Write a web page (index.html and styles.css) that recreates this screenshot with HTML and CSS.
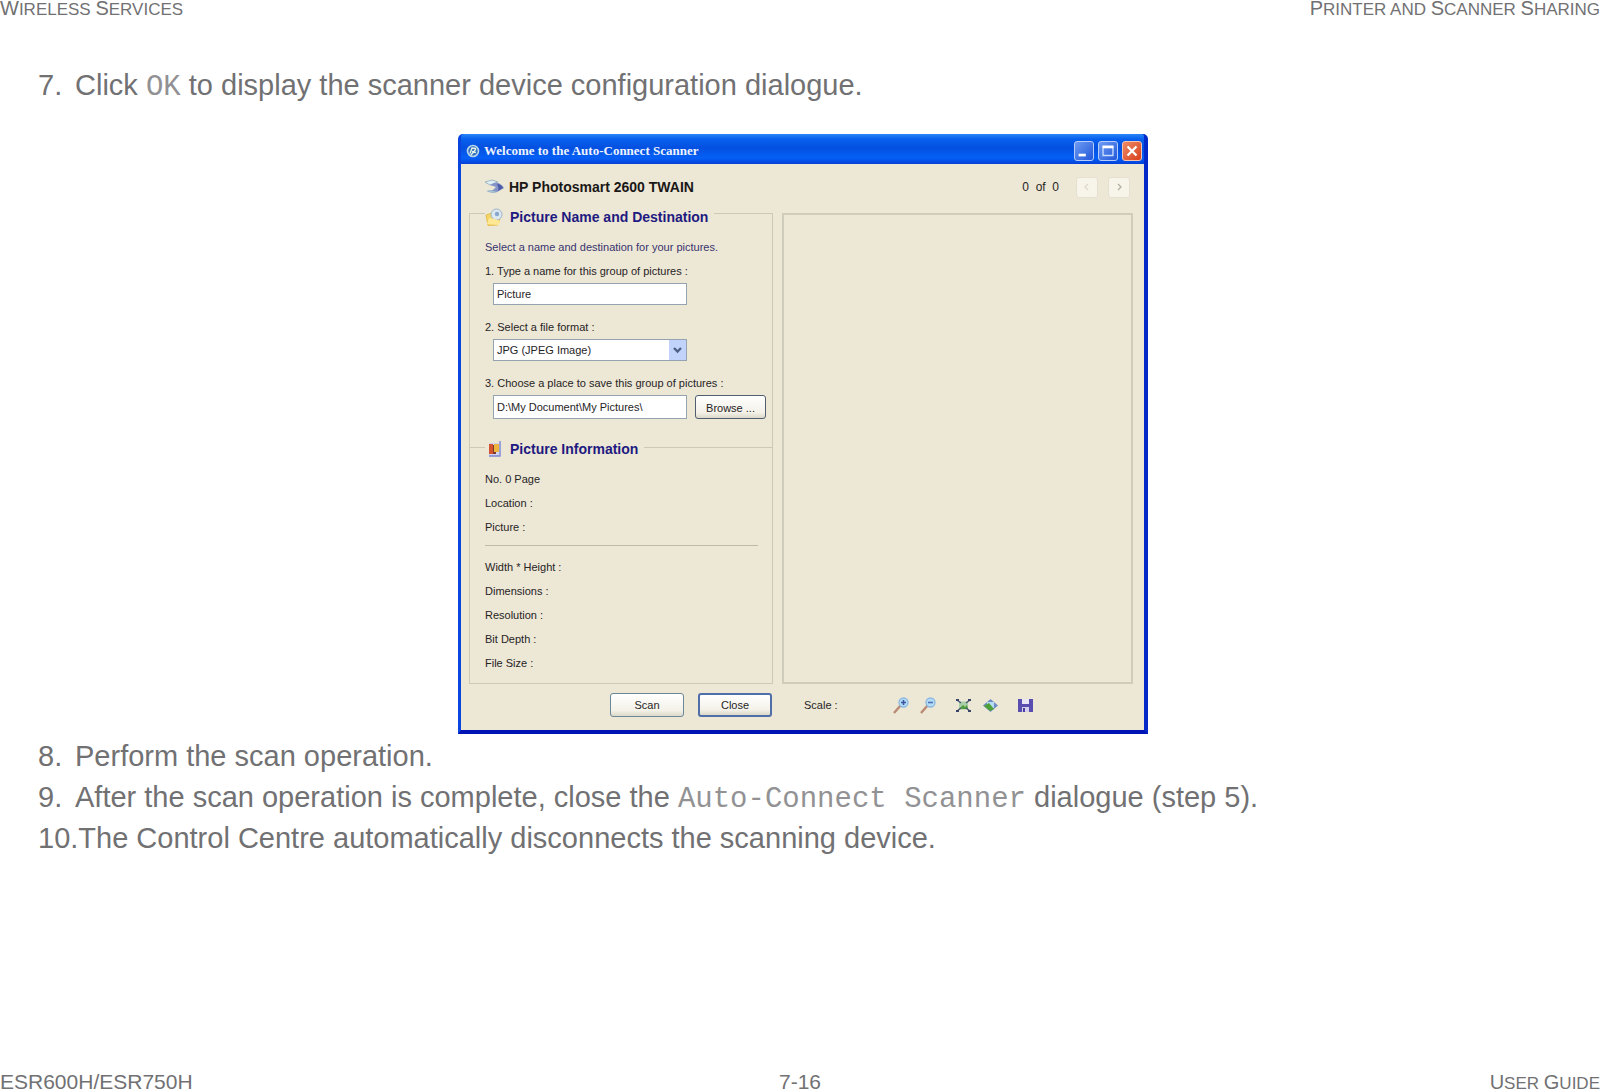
FILE: index.html
```html
<!DOCTYPE html>
<html lang="en">
<head>
<meta charset="utf-8">
<title>Wireless Services - Printer and Scanner Sharing</title>
<link rel="stylesheet" href="styles.css">
</head>
<body>
<header class="running">
  <span class="caps"><span class="cap">W</span>IRELESS <span class="cap">S</span>ERVICES</span>
  <span class="caps"><span class="cap">P</span>RINTER AND <span class="cap">S</span>CANNER <span class="cap">S</span>HARING</span>
</header>

<main class="content">
  <ol class="steps" start="7">
    <li><span class="num">7.</span><p>Click <code>OK</code> to display the scanner device configuration dialogue.</p></li>
  </ol>

  <figure class="figure">
    <section class="window" aria-label="Welcome to the Auto-Connect Scanner">
      <div class="titlebar">
        <svg class="app-icon" viewBox="0 0 14 14" width="14" height="14"><circle cx="7" cy="7" r="5.5" fill="#2f6fc0" stroke="#b9d8ee" stroke-width="1.6"/><path d="M4 9.5 6 4l4 .5M5 11l5-6M6 7.5l4 1" stroke="#e6f3e4" stroke-width="1.3" fill="none"/></svg>
        <span class="titlebar-text">Welcome to the Auto-Connect Scanner</span>
        <button class="win-btn" type="button" aria-label="Minimize"><svg viewBox="0 0 20 20" width="18" height="18"><path d="M4 13h8v3H4z" fill="#fff"/></svg></button>
        <button class="win-btn" type="button" aria-label="Maximize"><svg viewBox="0 0 20 20" width="18" height="18"><path d="M4.5 5h11v10h-11z" fill="none" stroke="#c5dcff" stroke-width="1.5"/><path d="M4 4h12v3H4z" fill="#fff"/></svg></button>
        <button class="win-btn win-close" type="button" aria-label="Close window"><svg viewBox="0 0 20 20" width="18" height="18"><path d="m5 5 10 10M15 5 5 15" stroke="#fff" stroke-width="2.6"/></svg></button>
      </div>

      <div class="window-body">
        <div class="device">
          <svg viewBox="0 0 22 16" width="22" height="16"><path d="M2 3 9 1l6 2-8 3z" fill="#dff0f5" stroke="#8eabb8" stroke-width=".8"/><path d="M4 12c3 2 7 2 10 1l7-4c-2-4-6-6-10-5L7 6l6 2-3 3z" fill="#8294c8"/><path d="M14 5c3 0 5 2 6 4l-5 3c1-3 0-5-1-7z" fill="#4c5aa8"/><path d="m3 12 8 2 3-1-7-2z" fill="#a7c3cd"/></svg>
          <strong class="device-name">HP Photosmart 2600 TWAIN</strong>
          <span class="count">0&nbsp; of&nbsp; 0</span>
          <button class="nav-btn" type="button" aria-label="Previous"><svg viewBox="0 0 10 10" width="10" height="10"><path d="M6 2 3 5l3 3" fill="none" stroke="#ded9cc" stroke-width="1.3"/></svg></button>
          <button class="nav-btn" type="button" aria-label="Next"><svg viewBox="0 0 10 10" width="10" height="10"><path d="m4 2 3 3-3 3" fill="none" stroke="#b3aea2" stroke-width="1.3"/></svg></button>
        </div>

        <div class="columns">
          <div class="left">
            <fieldset class="group group-dest">
              <legend>
                <svg viewBox="0 0 20 18" width="20" height="18"><path d="M1 7 7 5l2 2 6 4-2 6-10 .5z" fill="#f5d563" stroke="#dfb643" stroke-width=".8"/><circle cx="11.500" cy="6.500" r="5.500" fill="#dbe8ef" stroke="#9fb4c8"/><circle cx="12" cy="6" r="2.200" fill="#8aa6cf"/><path d="m2 16 2-6 6 1 5 2-1 4z" fill="#ffe894"/></svg>
                Picture Name and Destination
              </legend>
              <p class="hint">Select a name and destination for your pictures.</p>
              <label for="pic-name">1. Type a name for this group of pictures :</label>
              <input class="field" id="pic-name" type="text" value="Picture">
              <label for="format" class="next">2. Select a file format :</label>
              <span class="select-wrap">
                <select class="field" id="format"><option>JPG (JPEG Image)</option></select>
                <svg class="arrow" viewBox="0 0 17 20" width="17" height="20"><path d="M0 0h17v20H0z" fill="#c1d3fb"/><path d="m5 8 3.500 3.500L12 8" fill="none" stroke="#4d6185" stroke-width="2.400"/></svg>
              </span>
              <label for="folder" class="next">3. Choose a place to save this group of pictures :</label>
              <div class="folder-row">
                <input class="field" id="folder" type="text" value="D:\My Document\My Pictures\">
                <button class="push browse" type="button">Browse ...</button>
              </div>
            </fieldset>

            <fieldset class="group group-info">
              <legend>
                <svg viewBox="0 0 20 18" width="20" height="18"><path d="M4 3h11V1h1v15H4z" fill="#cfd3ef"/><path d="M4 4h4v10H4z" fill="#d3542f"/><path d="M8 5h3v9H8z" fill="#7e3a2a"/><path d="M9 4h5v8H9z" fill="#edb53d"/><path d="M15 1v15H4" fill="none" stroke="#7f86cf" stroke-width="1.300"/></svg>
                Picture Information
              </legend>
              <ul class="info">
                <li>No. 0 Page</li>
                <li>Location :</li>
                <li>Picture :</li>
              </ul>
              <hr>
              <ul class="info">
                <li>Width * Height :</li>
                <li>Dimensions :</li>
                <li>Resolution :</li>
                <li>Bit Depth :</li>
                <li>File Size :</li>
              </ul>
            </fieldset>
          </div>
          <div class="preview"></div>
        </div>

        <div class="columns bottom">
          <div class="actions">
            <button class="push" type="button">Scan</button>
            <button class="push default" type="button">Close</button>
          </div>
          <div class="tools">
            <span class="scale">Scale :</span>
            <button class="tool" type="button" aria-label="Zoom in"><svg viewBox="0 0 17 17" width="17" height="17"><path d="m1 16 7-8" stroke="#b98a75" stroke-width="2.400"/><circle cx="10.500" cy="5.500" r="4.500" fill="#b5dcf6" stroke="#8bb9e2" stroke-width="1.300"/><path d="M8 5.500h5M10.500 3v5" stroke="#3d57a5" stroke-width="1.600"/></svg></button>
            <button class="tool" type="button" aria-label="Zoom out"><svg viewBox="0 0 17 17" width="17" height="17"><path d="m1 16 7-8" stroke="#b98a75" stroke-width="2.400"/><circle cx="10.500" cy="5.500" r="4.500" fill="#b5dcf6" stroke="#8bb9e2" stroke-width="1.300"/><path d="M8 5.500h5" stroke="#4a72b5" stroke-width="1.600"/></svg></button>
            <button class="tool spaced" type="button" aria-label="Fit to window"><svg viewBox="0 0 17 17" width="17" height="17"><path d="M4 4.500h9v8H4z" fill="#a9cfa6"/><path d="m4 12 4-4 2 2 2-2 1 4z" fill="#4f9b3e"/><path d="m2 3 4 3M15 3l-4 3M2 14l4-3M15 14l-4-3" stroke="#4b5975" stroke-width="1.500"/><path d="M1 2h3v2H1zM13 2h3v2h-3zM1 13h3v2H1zM13 13h3v2h-3z" fill="#3b4569"/></svg></button>
            <button class="tool" type="button" aria-label="Actual size"><svg viewBox="0 0 17 17" width="17" height="17"><path d="M8.500 2 16 8.500 8.500 15 1 8.500z" fill="#6f8cc4"/><path d="M5 5h7v6H5z" fill="#b5dcf0"/><path d="m2 9 5-3 5 6-4 2z" fill="#4fa23a"/></svg></button>
            <button class="tool spaced" type="button" aria-label="Save"><svg viewBox="0 0 17 17" width="17" height="17"><path d="M1 2h15v13H1z" fill="#5a4db0"/><path d="M5 2h7v5H5z" fill="#e9e6f6"/><path d="M5 10h7v5H5z" fill="#d4d0ec"/><path d="M6 11h2v4H6z" fill="#4a3fa0"/></svg></button>
          </div>
        </div>
      </div>
    </section>
  </figure>

  <ol class="steps" start="8">
    <li><span class="num">8.</span><p>Perform the scan operation.</p></li>
    <li><span class="num">9.</span><p>After the scan operation is complete, close the <code>Auto-Connect Scanner</code> dialogue (step 5).</p></li>
    <li><span class="num">10.</span><p>The Control Centre automatically disconnects the scanning device.</p></li>
  </ol>
</main>

<footer class="running">
  <span>ESR600H/ESR750H</span>
  <span class="page-no">7-16</span>
  <span class="caps"><span class="cap">U</span>SER <span class="cap">G</span>UIDE</span>
</footer>
</body>
</html>
```
FILE: styles.css
```css
* { box-sizing: border-box; }

body {
  margin: 0;
  min-height: 100vh;
  display: flex;
  flex-direction: column;
  background: #fff;
  color: #717173;
  font-family: "Liberation Sans", Arial, sans-serif;
}

p, ol, ul, figure { margin: 0; padding: 0; }
ol, ul { list-style: none; }

/* running header and footer */
.running {
  display: flex;
  align-items: baseline;
  justify-content: space-between;
  font-size: 21px;
  line-height: 16px;
  white-space: nowrap;
}
footer.running { line-height: 15px; }
.running > * { flex: 1; }
.running > :last-child { text-align: right; }
.page-no { text-align: center; }
.caps { font-size: 17px; }
.cap { font-size: 20px; }

.content { flex: 1; padding-top: 47px; }

.steps { padding-left: 38px; font-size: 29px; line-height: 41px; }
.steps li { display: flex; }
.num { min-width: 37px; }
.steps code {
  font-family: "Liberation Mono", "Courier New", monospace;
  font-size: 29px;
  line-height: 1;
  color: #929294;
}

.figure { padding-left: 6px; margin: 28px 0 2px; }

/* dialog window */
.window {
  max-width: 690px;
  margin: 0 auto;
  border: solid #0013b4;
  border-width: 0 4px 4px 3px;
  border-left-color: #0a45e0;
  border-right-color: #0528c8;
  border-radius: 5px 5px 0 0;
  background: #0550e8;
  font-size: 11px;
  color: #26241f;
}
.window button, .window input, .window select { font: inherit; color: inherit; }
.window button { padding: 0; }
.window svg { display: block; flex: none; }

.titlebar {
  display: flex;
  align-items: center;
  gap: 4px;
  height: 30px;
  padding: 3px 2px 0 5px;
  border-radius: 3px 3px 0 0;
  background: linear-gradient(#2a86f5 0, #0860ee 5px, #0450e0 14px, #0560f6 24px, #0340d8 100%);
}
.titlebar-text {
  flex: 1;
  font-family: "Liberation Serif", "Times New Roman", serif;
  font-size: 13px;
  font-weight: bold;
  color: #eef4ff;
}
.win-btn {
  width: 20px;
  height: 20px;
  border: 1px solid #b4cdfa;
  border-radius: 3px;
  background: linear-gradient(135deg, #6d9bf2, #2257da);
}
.window .win-close { background: linear-gradient(135deg, #ef8a66, #d8401c); border-color: #f3c3b4; }

.window-body { background: #ede7d6; }

.device {
  display: flex;
  align-items: center;
  height: 35px;
  padding: 11px 14px 0 22px;
}
.device-name { flex: 1; padding-left: 4px; font-size: 14px; color: #1a1817; }
.count { padding-right: 17px; font-size: 12px; }
.nav-btn {
  display: grid;
  place-items: center;
  width: 22px;
  height: 21px;
  border: 1px solid #e5e0d0;
  border-radius: 3px;
  background: #f7f4ea;
}
.nav-btn + .nav-btn { margin-left: 10px; }

.columns {
  display: grid;
  grid-template-columns: 304fr 351fr;
  gap: 9px;
  padding: 0 11px 0 8px;
}

.group {
  min-width: 0;
  margin: 0;
  border: 1px solid #cdc9b9;
  line-height: 24px;
}
.group legend {
  display: flex;
  align-items: center;
  gap: 5px;
  padding: 0 6px 0 0;
  font-size: 14px;
  font-weight: bold;
  line-height: 20px;
  color: #1e1a80;
}
.group-dest { border-bottom: 0; padding: 8px 6px 28px 15px; }
.group-dest legend { padding-top: 8px; }
.group-info { margin-top: -12px; padding: 8px 14px 8px 15px; }
.group-info legend { padding-top: 4px; }
.group label { display: block; }
.group .next { margin-top: 10px; }
.hint { color: #38346e; }

.field {
  display: block;
  width: 194px;
  height: 22px;
  margin: 0 0 0 8px;
  padding: 0 3px;
  border: 1px solid #93a4b0;
  border-radius: 0;
  background: #fff;
}
.select-wrap { display: grid; width: 202px; align-items: center; }
.select-wrap > * { grid-area: 1 / 1; }
.window .select-wrap select { appearance: none; line-height: 20px; }
.arrow { justify-self: end; margin-right: 1px; pointer-events: none; }
.folder-row { display: flex; gap: 8px; }
.folder-row .field { height: 24px; }

.push {
  width: 74px;
  height: 24px;
  border: 1px solid #6b8798;
  border-radius: 3px;
  background: linear-gradient(#fff, #f3f1e8 75%, #dcd8c9);
}
.window .browse { width: 71px; border-color: #4f5f70; }
.push.default { border: 2px solid #506fa8; }

.info li { height: 24px; }
.group hr { margin: 6px 0 9px; border: 0; height: 1px; background: #c0b8a8; }

.preview { margin-top: 14px; border: 2px solid #d0ccbb; }

.bottom { padding-top: 9px; padding-bottom: 13px; }
.actions { display: flex; justify-content: flex-end; gap: 14px; padding-right: 1px; }
.tools { display: flex; align-items: center; gap: 10px; padding-left: 22px; }
.scale { width: 79px; }
.tool { width: 17px; height: 17px; border: 0; background: none; }
.tool.spaced { margin-left: 8px; }
```
